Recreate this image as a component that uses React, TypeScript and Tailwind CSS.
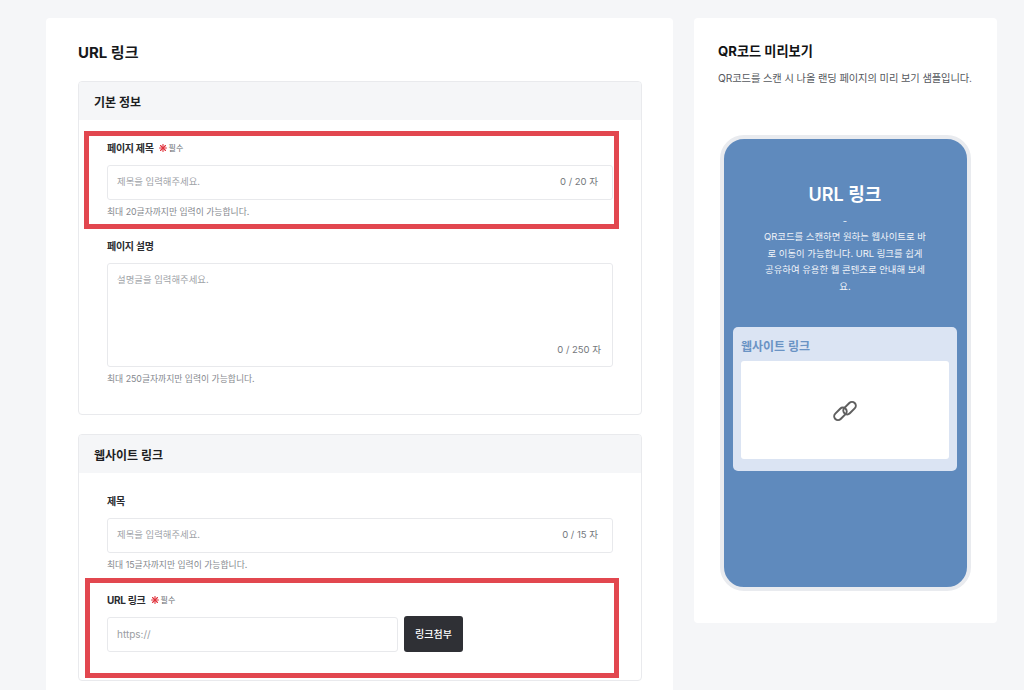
const Star = () => (
  <svg width="8" height="8" viewBox="0 0 8 8" className="ml-[5px] shrink-0" stroke="#e0323c" strokeWidth="1.1" strokeLinecap="round">
    <line x1="4" y1="0.5" x2="4" y2="7.5" />
    <line x1="0.5" y1="4" x2="7.5" y2="4" />
    <line x1="1.5" y1="1.5" x2="6.5" y2="6.5" />
    <line x1="6.5" y1="1.5" x2="1.5" y2="6.5" />
  </svg>
);

const Label = ({ text, required }: { text: string; required?: boolean }) => (
  <div className="flex items-center h-[20px] mb-[7px] text-[10px] font-bold text-[#2a2b2f] tracking-[-0.3px]">
    {text}
    {required && (
      <>
        <Star />
        <span className="ml-[2px] text-[8px] font-normal text-[#666a70] tracking-normal">필수</span>
      </>
    )}
  </div>
);

const Hint = ({ text }: { text: string }) => (
  <p className="mt-[5px] h-[14px] leading-[14px] text-[8.8px] text-[#85888e]">{text}</p>
);

const TextField = ({ count }: { count: string }) => (
  <div className="flex items-center justify-between h-[35px] pl-[9px] pr-[14px] border border-[#e8e9ec] rounded-[3px] bg-white">
    <span className="text-[9.4px] text-[#a0a3a8]">제목을 입력해주세요.</span>
    <span className="text-[9.5px] text-[#74777c]">{count}</span>
  </div>
);

const Section = ({ title, children }: { title: string; children: React.ReactNode }) => (
  <section className="border border-[#e9eaed] rounded-[4px] overflow-hidden">
    <h2 className="flex items-center h-[38px] pl-[15px] pt-[3px] bg-[#f5f6f8] text-[12px] font-bold text-[#1d1e22]">{title}</h2>
    <div className="pl-[28px] pr-[28px] pt-[18px] pb-[28px] flex flex-col">{children}</div>
  </section>
);

const Highlight = ({ className }: { className: string }) => (
  <div className={`absolute border-[5px] border-[#e2474f] pointer-events-none ${className}`} />
);

export default function App() {
  return (
    <div
      className="h-[690px] overflow-hidden bg-[#f5f6f8] flex items-start gap-[21px] pl-[46px] pt-[18px]"
      style={{ fontFamily: 'Inter, "Noto Sans CJK KR", sans-serif' }}
    >
      <main className="w-[627px] shrink-0 bg-white rounded-[4px] pl-[32px] pr-[31px] pb-[40px]">
        <h1 className="h-[63px] pt-[23px] leading-[24px] text-[15px] font-bold text-[#17181b]">URL 링크</h1>

        <Section title="기본 정보">
          <div className="relative mb-[17px]">
            <Label text="페이지 제목" required />
            <TextField count="0 / 20 자" />
            <Hint text="최대 20글자까지만 입력이 가능합니다." />
            <Highlight className="left-[-23px] right-[-6px] top-[-7px] bottom-[-10px]" />
          </div>

          <div>
            <Label text="페이지 설명" />
            <div className="relative h-[104px] border border-[#e8e9ec] rounded-[3px] pl-[9px] pt-[9px] text-[9.4px] text-[#a0a3a8]">
              설명글을 입력해주세요.
              <span className="absolute right-[11px] bottom-[9px] text-[9.5px] text-[#74777c]">0 / 250 자</span>
            </div>
            <Hint text="최대 250글자까지만 입력이 가능합니다." />
          </div>
        </Section>

        <div className="h-[19px]" />

        <Section title="웹사이트 링크">
          <div className="mb-[18px]">
            <Label text="제목" />
            <TextField count="0 / 15 자" />
            <Hint text="최대 15글자까지만 입력이 가능합니다." />
          </div>

          <div className="relative">
            <Label text="URL 링크" required />
            <div className="flex items-end gap-[6px]">
              <div className="flex items-center w-[291px] h-[35px] pl-[9px] border border-[#e8e9ec] rounded-[3px] text-[10px] text-[#9a9da2]">
                https://
              </div>
              <button className="w-[59px] h-[36px] -mt-[1px] rounded-[3px] bg-[#2f3035] text-[10px] font-medium text-white">링크첨부</button>
            </div>
            <Highlight className="left-[-22px] right-[-6px] top-[-12px] bottom-[-26px]" />
          </div>
        </Section>
      </main>

      <aside className="w-[303px] h-[605px] shrink-0 bg-white rounded-[4px] pl-[24px] pr-[24px]">
        <h2 className="pt-[23px] leading-[20px] text-[13.2px] font-bold text-[#111214]">QR코드 미리보기</h2>
        <p className="mt-[9px] leading-[16px] text-[10.25px] text-[#55585d] whitespace-nowrap tracking-[-0.1px]">
          QR코드를 스캔 시 나올 랜딩 페이지의 미리 보기 샘플입니다.
        </p>

        <div className="mt-[49px] ml-[2px] w-[251px] h-[456px] border-[4px] border-[#e9ebef] rounded-[24px] bg-[#5f8abd] pl-[9px] pr-[10px] overflow-hidden">
          <div className="pt-[42px] text-center text-white">
            <h3 className="h-[28px] leading-[28px] text-[18px] font-semibold">URL 링크</h3>
            <div className="mt-[4px] text-[9.4px] leading-[16.4px] text-[#f1f4f9] whitespace-nowrap">
              <p>-</p>
              <p>
                QR코드를 스캔하면 원하는 웹사이트로 바<br />
                로 이동이 가능합니다. URL 링크를 쉽게<br />
                공유하여 유용한 웹 콘텐츠로 안내해 보세<br />
                요.
              </p>
            </div>
          </div>

          <div className="mt-[32px] h-[144px] rounded-[5px] bg-[#dbe4f3] px-[8px] pt-[10px]">
            <h4 className="h-[20px] leading-[20px] text-[12px] font-bold text-[#6a93c4]">웹사이트 링크</h4>
            <div className="mt-[4px] h-[98px] rounded-[3px] bg-white flex items-center justify-center">
              <svg width="24" height="24" viewBox="0 0 24 24" fill="none" stroke="#5f5f5f" strokeWidth="2" className="mt-[1px]">
                <g transform="rotate(45 12 12)">
                  <rect x="9.4" y="-0.5" width="7.6" height="14.5" rx="3.8" />
                  <rect x="7" y="10" width="7.6" height="14.5" rx="3.8" />
                </g>
              </svg>
            </div>
          </div>
        </div>
      </aside>
    </div>
  );
}
